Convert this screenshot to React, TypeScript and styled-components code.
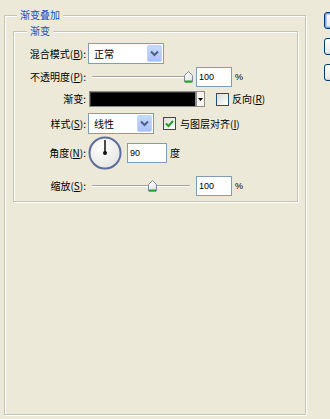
import React from 'react';
import styled, { createGlobalStyle } from 'styled-components';

const Global = createGlobalStyle`
  html, body { margin: 0; padding: 0; background: #ECE9D8; }
  body {
    font-family: "Noto Sans CJK SC", "Liberation Sans", sans-serif;
    font-size: 10px;
    color: #000;
  }
`;

const Page = styled.div`
  display: flex;
  align-items: flex-start;
  gap: 18px;
  padding: 9px 0 0 4px;
  width: 330px;
  height: 419px;
  box-sizing: border-box;
  overflow: hidden;
`;

const Group = styled.fieldset<{ $h?: number; $mt?: number; $pl: number; $pr: number; $pb: number }>`
  margin: ${(p) => p.$mt ?? 0}px 0 0 0;
  min-width: 0;
  box-sizing: border-box;
  ${(p) => (p.$h ? `height: ${p.$h}px;` : '')}
  padding: 0 ${(p) => p.$pr}px ${(p) => p.$pb}px ${(p) => p.$pl}px;
  border: 1px solid #C6C3B3;
  box-shadow: inset 1px 1px 0 #fff, 1px 1px 0 #fff;
`;

const Legend = styled.legend<{ $ml: number }>`
  margin-left: ${(p) => p.$ml}px;
  padding: 0 3px;
  line-height: 12px;
  font-size: 10px;
  color: #1A4DCB;
  background: #ECE9D8;
`;

const Outer = styled(Group)`
  width: 302px;
  flex: none;
`;

const Form = styled.div`
  display: flex;
  flex-direction: column;
`;

const Row = styled.div<{ $h: number; $mt: number }>`
  display: flex;
  align-items: center;
  height: ${(p) => p.$h}px;
  margin-top: ${(p) => p.$mt}px;
`;

const Label = styled.span`
  width: 72px;
  margin-right: 2px;
  text-align: right;
  white-space: nowrap;
  line-height: 12px;
  flex: none;
`;

const Text = styled.span<{ $ml?: number }>`
  margin-left: ${(p) => p.$ml ?? 0}px;
  white-space: nowrap;
  line-height: 12px;
`;

const Select = styled.div<{ $w: number }>`
  width: ${(p) => p.$w}px;
  height: 21px;
  box-sizing: border-box;
  border: 1px solid #7F9DB9;
  background: #fff;
  display: flex;
  align-items: center;
  padding: 1px;
  flex: none;
`;

const SelectValue = styled.span`
  flex: 1;
  padding-left: 4px;
  line-height: 12px;
`;

const DropBtn = styled.div`
  width: 15px;
  align-self: stretch;
  box-sizing: border-box;
  border: 1px solid #C1D3FB;
  border-radius: 2px;
  background: linear-gradient(#C7D8FC, #A9C2F6);
  display: flex;
  align-items: center;
  justify-content: center;
`;

const Input = styled.div<{ $w: number; $ml: number }>`
  width: ${(p) => p.$w}px;
  height: 20px;
  margin-left: ${(p) => p.$ml}px;
  box-sizing: border-box;
  border: 1px solid #7F9DB9;
  background: #fff;
  font-family: "Liberation Sans", Arial, sans-serif;
  font-size: 9px;
  display: flex;
  align-items: center;
  padding-left: 2px;
  flex: none;
`;

const Unit = styled.span`
  margin-left: 3px;
  font-family: "Liberation Sans", Arial, sans-serif;
  font-size: 9px;
`;

const Slider = styled.div`
  position: relative;
  width: 102px;
  height: 14px;
  margin-left: 2px;
  flex: none;
`;

const Track = styled.div`
  position: absolute;
  left: 2px;
  right: 2px;
  top: 6px;
  height: 0;
  border-top: 1px solid #A5A399;
  border-bottom: 1px solid #fff;
  border-radius: 1px;
`;

const Thumb = styled.svg`
  position: absolute;
  top: 1px;
  margin-left: -4px;
`;

const GradientBar = styled.div`
  width: 107px;
  height: 16px;
  margin-left: 1px;
  box-sizing: border-box;
  border: 1px solid #8A8A8A;
  box-shadow: inset 1px 1px 0 #333;
  background: #000;
  flex: none;
`;

const SmallArrow = styled.div`
  width: 9px;
  height: 16px;
  box-sizing: border-box;
  border: 1px solid #8E8C85;
  background: #F5F4EF;
  display: flex;
  align-items: center;
  justify-content: center;
  flex: none;
`;

const Check = styled.div<{ $ml: number }>`
  width: 13px;
  height: 13px;
  margin-left: ${(p) => p.$ml}px;
  box-sizing: border-box;
  border: 1px solid #1C5180;
  background: linear-gradient(135deg, #DCDCD7, #fff);
  display: flex;
  align-items: center;
  justify-content: center;
  flex: none;
`;

const Dial = styled.svg`
  flex: none;
`;

const ButtonCol = styled.div`
  display: flex;
  flex-direction: column;
  gap: 9px;
  margin-top: 3px;
`;

const Button = styled.div<{ $def?: boolean }>`
  width: 70px;
  height: 17px;
  box-sizing: border-box;
  border: 1px solid #003C74;
  border-radius: 3px;
  background: linear-gradient(#FFFFFF, #ECEBE6 85%, #D6D0C5);
  box-shadow: ${(p) => (p.$def ? 'inset 0 0 0 1px #7DA2F0, inset 0 0 0 2px #B8CEF9' : 'none')};
`;

const Mn = styled.u``;

const Chevron = () => (
  <svg width="9" height="7" viewBox="0 0 9 7">
    <path d="M1 1.5 L4.5 5 L8 1.5" fill="none" stroke="#4D6185" strokeWidth="2" />
  </svg>
);

const SliderThumb = ({ pct }: { pct: number }) => (
  <Thumb width="9" height="12" viewBox="0 0 9 12" style={{ left: `${4 + (pct / 100) * 94}px` }}>
    <defs>
      <linearGradient id="tg" x1="0" y1="0" x2="1" y2="1">
        <stop offset="0" stopColor="#fff" />
        <stop offset="1" stopColor="#E3E2DC" />
      </linearGradient>
    </defs>
    <path d="M0.5 11 V4.5 L4.5 0.5 L8.5 4.5 V11 Z" fill="url(#tg)" stroke="#7C8A99" strokeWidth="1" />
    <path d="M1 10.5 H8" stroke="#21A621" strokeWidth="2" />
  </Thumb>
);

const SliderControl = ({ pct }: { pct: number }) => (
  <Slider>
    <Track />
    <SliderThumb pct={pct} />
  </Slider>
);

const CheckMark = () => (
  <svg width="9" height="9" viewBox="0 0 9 9">
    <path d="M1 4.5 L3.5 7 L8 2" fill="none" stroke="#21A121" strokeWidth="2" />
  </svg>
);

const AngleDial = ({ deg }: { deg: number }) => {
  const r = Math.PI * deg / 180;
  const x = 17 + Math.cos(r) * 13;
  const y = 17 - Math.sin(r) * 13;
  return (
    <Dial width="34" height="34" viewBox="0 0 34 34">
      <defs>
        <radialGradient id="dg" cx="0.4" cy="0.35" r="0.7">
          <stop offset="0" stopColor="#FFFFFF" />
          <stop offset="1" stopColor="#E4E4E0" />
        </radialGradient>
      </defs>
      <circle cx="17" cy="17" r="15.5" fill="url(#dg)" stroke="#5B6D9C" strokeWidth="2" />
      <line x1="17" y1="17" x2={x} y2={y} stroke="#111" strokeWidth="1.5" />
      <circle cx="17" cy="17" r="2" fill="#111" />
    </Dial>
  );
};

export default function App() {
  return (
    <>
      <Global />
      <Page>
        <Outer $h={406} $pl={8} $pr={7} $pb={8}>
          <Legend $ml={4}>渐变叠加</Legend>
          <Group $mt={4} $pl={0} $pr={0} $pb={5}>
            <Legend $ml={13}>渐变</Legend>
            <Form>
              <Row $h={21} $mt={6}>
                <Label>混合模式(<Mn>B</Mn>):</Label>
                <Select $w={76}>
                  <SelectValue>正常</SelectValue>
                  <DropBtn><Chevron /></DropBtn>
                </Select>
              </Row>
              <Row $h={20} $mt={3}>
                <Label>不透明度(<Mn>P</Mn>):</Label>
                <SliderControl pct={100} />
                <Input $w={36} $ml={4}>100</Input>
                <Unit>%</Unit>
              </Row>
              <Row $h={16} $mt={4}>
                <Label>渐变:</Label>
                <GradientBar />
                <SmallArrow>
                  <svg width="5" height="3" viewBox="0 0 5 3"><path d="M0 0 H5 L2.5 3 Z" fill="#000" /></svg>
                </SmallArrow>
                <Check $ml={11} />
                <Text $ml={3}>反向(<Mn>R</Mn>)</Text>
              </Row>
              <Row $h={21} $mt={6}>
                <Label>样式(<Mn>S</Mn>):</Label>
                <Select $w={66}>
                  <SelectValue>线性</SelectValue>
                  <DropBtn><Chevron /></DropBtn>
                </Select>
                <Check $ml={9}><CheckMark /></Check>
                <Text $ml={4}>与图层对齐(<Mn>I</Mn>)</Text>
              </Row>
              <Row $h={34} $mt={2}>
                <Label>角度(<Mn>N</Mn>):</Label>
                <AngleDial deg={90} />
                <Input $w={40} $ml={5}>90</Input>
                <Text $ml={3}>度</Text>
              </Row>
              <Row $h={20} $mt={6}>
                <Label>缩放(<Mn>S</Mn>):</Label>
                <SliderControl pct={62} />
                <Input $w={36} $ml={4}>100</Input>
                <Unit>%</Unit>
              </Row>
            </Form>
          </Group>
        </Outer>
        <ButtonCol>
          <Button $def />
          <Button />
          <Button />
        </ButtonCol>
      </Page>
    </>
  );
}
